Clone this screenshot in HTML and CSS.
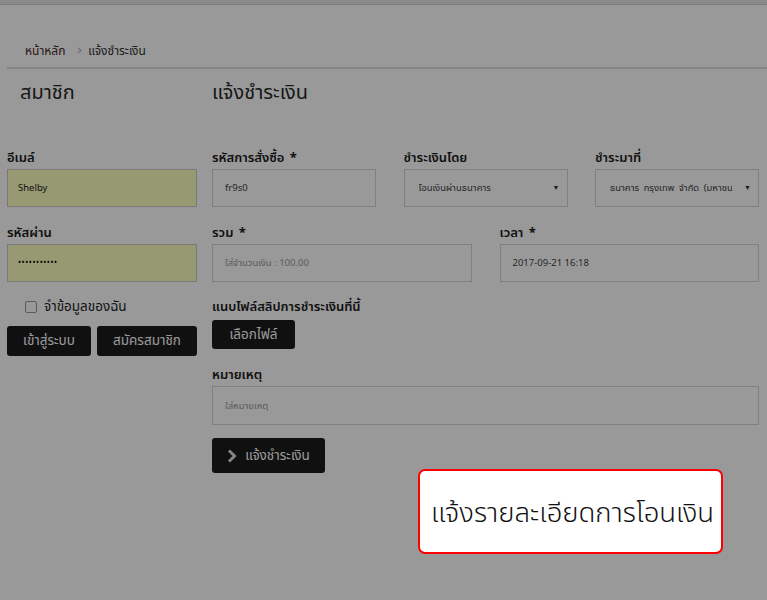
FILE: index.html
```html
<!DOCTYPE html>
<html lang="th">
<head>
<meta charset="utf-8">
<link rel="stylesheet" href="styles.css">
</head>
<body>
<div class="topbar"></div>
<div class="page">
  <div class="breadcrumb">
    <span class="crumb-home">หน้าหลัก</span>
    <span class="crumb-sep">&gt;</span>
    <span class="crumb-cur">แจ้งชำระเงิน</span>
  </div>
  <div class="divider"></div>
  <div class="columns">
    <div class="left">
      <h2 class="heading heading-left">สมาชิก</h2>
      <div class="field">
        <label class="label">อีเมล์</label>
        <div class="input autofill">Shelby</div>
      </div>
      <div class="field">
        <label class="label">รหัสผ่าน</label>
        <div class="input autofill dots">•••••••••••</div>
      </div>
      <div class="remember">
        <span class="checkbox"></span>
        <span>จำข้อมูลของฉัน</span>
      </div>
      <div class="btnrow">
        <button class="btn btn-login">เข้าสู่ระบบ</button>
        <button class="btn btn-register">สมัครสมาชิก</button>
      </div>
    </div>
    <div class="right">
      <h2 class="heading">แจ้งชำระเงิน</h2>
      <div class="grid3">
        <div class="field">
          <label class="label">รหัสการสั่งซื้อ <span class="req">*</span></label>
          <div class="input">fr9s0</div>
        </div>
        <div class="field">
          <label class="label">ชำระเงินโดย</label>
          <div class="input select"><span class="seltext">โอนเงินผ่านธนาคาร</span><span class="caret">▼</span></div>
        </div>
        <div class="field">
          <label class="label">ชำระมาที่</label>
          <div class="input select"><span class="seltext sel-bank">ธนาคาร กรุงเทพ จำกัด (มหาชน)</span><span class="caret">▼</span></div>
        </div>
      </div>
      <div class="grid2">
        <div class="field">
          <label class="label">รวม <span class="req">*</span></label>
          <div class="input placeholder">ใส่จำนวนเงิน : 100.00</div>
        </div>
        <div class="field">
          <label class="label">เวลา <span class="req">*</span></label>
          <div class="input">2017-09-21 16:18</div>
        </div>
      </div>
      <div class="field field-file">
        <label class="label">แนบไฟล์สลิปการชำระเงินที่นี้</label>
        <button class="btn btn-file">เลือกไฟล์</button>
      </div>
      <div class="field">
        <label class="label">หมายเหตุ</label>
        <div class="input placeholder note">ใส่หมายเหตุ</div>
      </div>
      <button class="btn btn-submit">
        <svg class="chev" width="10" height="14" viewBox="0 0 10 14"><polyline points="2,1.5 7.5,7 2,12.5" fill="none" stroke="#fff" stroke-width="3"/></svg>
        <span>แจ้งชำระเงิน</span>
      </button>
    </div>
  </div>
</div>
<div class="overlay"></div>
<div class="modal">แจ้งรายละเอียดการโอนเงิน</div>
</body>
</html>
```
FILE: styles.css
```css
html, body {
  margin: 0;
  padding: 0;
  background: #fff;
  font-family: "Noto Sans Thai", "Noto Sans", "Liberation Sans", sans-serif;
  color: #1e1e1e;
}
.topbar {
  height: 4px;
  background: #e6e6e6;
  border-bottom: 1px solid #d9c9c4;
}
.page {
  padding: 0 0 0 7px;
}
.breadcrumb {
  height: 62px;
  display: flex;
  align-items: flex-end;
  padding-left: 18px;
  font-size: 12px;
  line-height: 22px;
  box-sizing: border-box;
  padding-bottom: 5px;
}
.crumb-home { color: #4a2a2e; }
.crumb-sep { color: #999; margin: 0 5px 0 11px; font-size: 12px; transform: scaleX(0.6); display: inline-block; }
.crumb-cur { color: #333; }
.divider {
  height: 2px;
  background: #dcdcdc;
}
.columns {
  display: flex;
  gap: 15px;
}
.left { width: 190px; }
.right { width: 547px; }
.heading {
  font-size: 20px;
  font-weight: 400;
  margin: 0;
  height: 79px;
  line-height: 48px;
  color: #2a2a2a;
}
.heading-left { padding-left: 13px; }
.field { display: flex; flex-direction: column; }
.label {
  font-size: 13px;
  font-weight: 600;
  line-height: 20px;
  height: 20px;
  margin-bottom: 1px;
  color: #1a1a1a;
}
.req { font-weight: 700; margin-left: 2px; }
.input {
  height: 38px;
  box-sizing: border-box;
  border: 1px solid #d6d6d6;
  background: #fff;
  font-size: 9.5px;
  color: #444;
  display: flex;
  align-items: center;
  padding: 0 12px;
  margin-bottom: 16px;
  white-space: nowrap;
  overflow: hidden;
}
.autofill { background: #faffbd; color: #222; padding-left: 10px; border-color: #ccc; }
.dots { font-size: 8px; letter-spacing: 0.6px; color: #000; }
.placeholder { color: #999; }
.select { justify-content: space-between; padding-right: 7px; padding-left: 14px; }
.seltext { overflow: hidden; }
.sel-bank { width: 122px; word-spacing: 2px; }
.caret { font-size: 7px; color: #333; }
.remember {
  display: flex;
  align-items: center;
  gap: 7px;
  padding-left: 18px;
  font-size: 13.5px;
  height: 20px;
  margin-top: -1px;
  margin-bottom: 9px;
}
.checkbox {
  width: 10px;
  height: 10px;
  border: 1px solid #999;
  border-radius: 2px;
  background: #fff;
}
.btnrow { display: flex; gap: 6px; }
.btn {
  border: none;
  background: #1c1c1c;
  color: #fff;
  font-family: inherit;
  font-size: 13.5px;
  border-radius: 3px;
  height: 30px;
  padding: 0;
  display: inline-flex;
  align-items: center;
  justify-content: center;
}
.btn-login { width: 84px; }
.btn-register { width: 100px; }
.grid3 {
  display: grid;
  grid-template-columns: repeat(3, 1fr);
  column-gap: 27.5px;
}
.grid2 {
  display: grid;
  grid-template-columns: repeat(2, 1fr);
  column-gap: 28px;
}
.grid2 .input { margin-bottom: 15px; }
.field-file { align-items: flex-start; margin-bottom: 16px; }
.field-file .label { margin-bottom: 3px; }
.btn-file { width: 83px; height: 29px; }
.note { height: 39px; margin-bottom: 13px; }
.btn-submit {
  width: 113px;
  height: 35px;
  gap: 8px;
}
.chev { display: block; opacity: 0.85; }
.overlay {
  position: fixed;
  inset: 0;
  background: rgba(0, 0, 0, 0.4);
}
.modal {
  position: absolute;
  left: 418px;
  top: 469px;
  width: 305px;
  height: 85px;
  box-sizing: border-box;
  background: #fff;
  border: 2px solid #ff0000;
  border-radius: 7px;
  display: flex;
  align-items: center;
  justify-content: center;
  font-size: 27.5px;
  font-weight: 300;
  color: #111;
  padding-left: 4px;
  padding-top: 4px;
}
```
